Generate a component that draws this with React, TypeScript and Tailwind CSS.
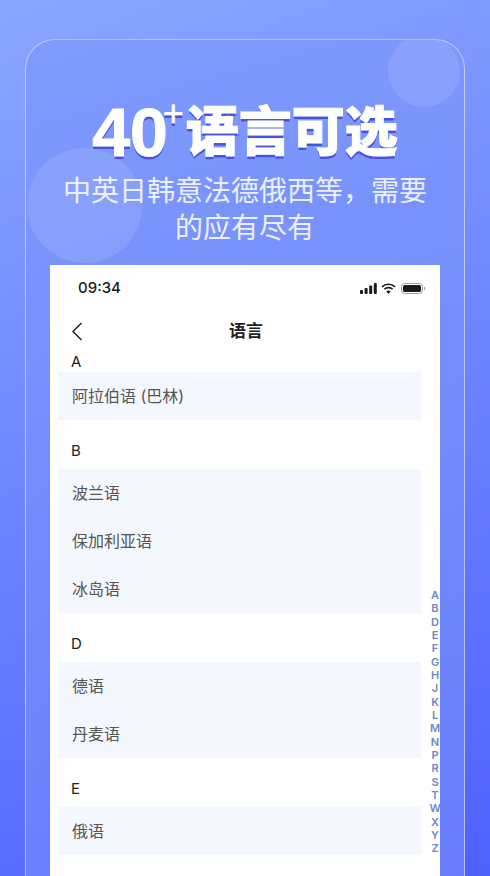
const sections = [
  { letter: 'A', items: ['阿拉伯语 (巴林)'] },
  { letter: 'B', items: ['波兰语', '保加利亚语', '冰岛语'] },
  { letter: 'D', items: ['德语', '丹麦语'] },
  { letter: 'E', items: ['俄语'] },
]

const indexLetters = 'ABDEFGHJKLMNPRSTWXYZ'.split('')

const cjk = 'font-["Inter","Noto_Sans_CJK_SC",sans-serif]'

function StatusIcons() {
  return (
    <div className="flex items-center gap-[3px]">
      <svg width="18" height="11" viewBox="0 0 18 11" fill="#1b1b1b">
        <rect x="0" y="7" width="3" height="4" rx="1" />
        <rect x="4.6" y="5" width="3" height="6" rx="1" />
        <rect x="9.2" y="2.5" width="3" height="8.5" rx="1" />
        <rect x="13.8" y="0" width="3" height="11" rx="1" />
      </svg>
      <svg width="15" height="11" viewBox="0 0 15 11" fill="none" stroke="#1b1b1b" strokeWidth="1.7">
        <path d="M1 3.8C4.6.4 10.4.4 14 3.8" />
        <path d="M3.4 6.2c2.3-2.1 5.9-2.1 8.2 0" />
        <path d="M7.5 10.6 5.6 8.6c1.1-1 2.7-1 3.8 0z" fill="#1b1b1b" strokeWidth="0.6" />
      </svg>
      <svg width="25" height="11" viewBox="0 0 25 11" className="ml-[2px]">
        <rect x="0.5" y="0.5" width="21" height="10" rx="3" fill="none" stroke="#9b9b9b" />
        <rect x="2" y="2" width="18" height="7" rx="1.6" fill="#1b1b1b" />
        <path d="M23 3.8c.9.3 1.3 1 1.3 1.7s-.4 1.4-1.3 1.7z" fill="#9b9b9b" />
      </svg>
    </div>
  )
}

export default function App() {
  return (
    <div className={`relative h-[876px] w-[490px] overflow-hidden bg-[linear-gradient(160deg,#8aa6ff,#5060ff)] px-[25px] pt-[39px] ${cjk}`}>
      {/* glass panel */}
      <div className="relative h-[900px] overflow-hidden rounded-[30px] border border-white/50 bg-[linear-gradient(165deg,#7f9bfd,#667afc)]">
        <div className="absolute left-[362px] top-[-5px] h-[72px] w-[72px] rounded-full bg-white/10" />
        <div className="absolute left-[1px] top-[108px] h-[115px] w-[115px] rounded-full bg-white/10" />

        <div className="relative flex flex-col items-center">
          <div className="mt-[60px] flex h-[64px] items-center justify-center text-white [-webkit-text-stroke:1px_white] [text-shadow:0_3px_0_#4653dc]">
            <span className="font-['Liberation_Sans',sans-serif] text-[68px] font-bold leading-none">40</span>
            <span className="mb-[36px] ml-[-5px] font-['Liberation_Sans',sans-serif] text-[36px] font-normal leading-none [-webkit-text-stroke:0.5px_white]">+</span>
            <span className="ml-[2px] text-[53px] font-black leading-none">语言可选</span>
          </div>
          <p className="mt-[9px] w-[370px] text-center text-[28px] font-normal leading-[37px] text-white/85">
            中英日韩意法德俄西等，需要的应有尽有
          </p>
        </div>

        {/* phone screen */}
        <div className="relative mx-[24px] mt-[18px] h-[640px] bg-white">
          <div className="flex h-[46px] items-center justify-between pl-[28px] pr-[14px] pt-[1px]">
            <span className="text-[15px] font-medium text-[#1b1b1b]">09:34</span>
            <StatusIcons />
          </div>
          <div className="relative flex h-[41px] items-center justify-center">
            <svg className="absolute left-[21px] top-[11px]" width="12" height="19" viewBox="0 0 12 19" fill="none" stroke="#222" strokeWidth="1.5">
              <path d="M10.5 1 2 9.5l8.5 8.5" />
            </svg>
            <span className="ml-[2px] text-[17px] font-bold text-[#222]">语言</span>
          </div>

          <div className="pl-[8px] pr-[19px]">
            {sections.map((section, i) => (
              <div key={section.letter} className={i > 0 ? 'mt-[21px]' : ''}>
                <div className={`flex h-5 items-center pl-[13px] text-[15px] text-[#222] ${i > 0 ? 'mb-[8px]' : ''}`}>
                  {section.letter}
                </div>
                <div className="bg-[#f4f7fe]">
                  {section.items.map(item => (
                    <div key={item} className="flex h-[48px] items-center pl-[14px] text-[16px] text-[#555]">
                      {item}
                    </div>
                  ))}
                </div>
              </div>
            ))}
          </div>

          {/* side index */}
          <div className="absolute left-[379px] top-[324px] flex w-[12px] flex-col items-center">
            {indexLetters.map(l => (
              <span key={l} className="h-[13.33px] text-[11px] font-semibold leading-[13.33px] text-[#6a8ac8]">
                {l}
              </span>
            ))}
          </div>
        </div>
      </div>
    </div>
  )
}
